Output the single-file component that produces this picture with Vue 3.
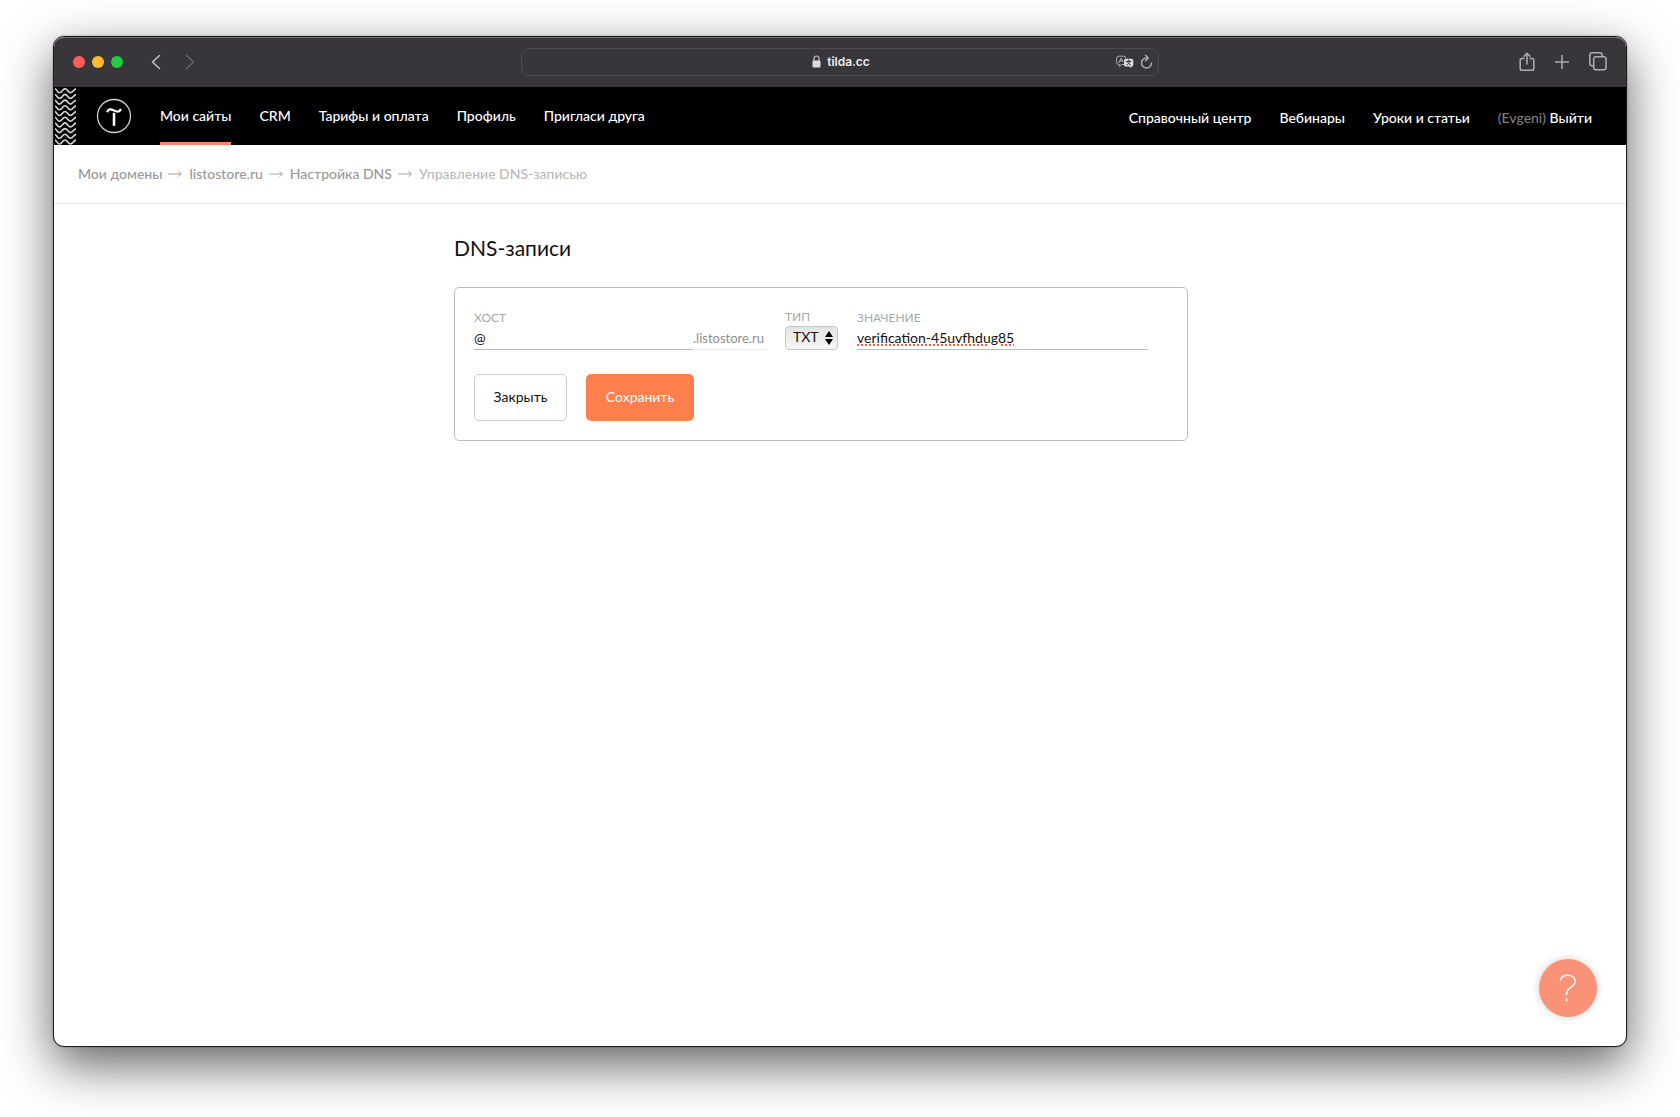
<script setup>
import { ref } from 'vue'

const mainLinks = ['Мои сайты', 'CRM', 'Тарифы и оплата', 'Профиль', 'Пригласи друга']
const sideLinks = ['Справочный центр', 'Вебинары', 'Уроки и статьи']
const crumbs = ['Мои домены', 'listostore.ru', 'Настройка DNS']
const types = ['TXT', 'A', 'AAAA', 'CNAME', 'MX']

const host = ref('@')
const type = ref('TXT')
const value = ref('verification-45uvfhdug85')
</script>

<template>
  <div class="desktop">
    <div class="window">
      <header class="toolbar">
        <div class="side">
          <div class="lights"><i class="red"></i><i class="yellow"></i><i class="green"></i></div>
          <button class="icon back" aria-label="Назад">
            <svg width="10" height="16" viewBox="0 0 10 16"><path d="M8.500 1.500 1.500 8l7 6.500" /></svg>
          </button>
          <button class="icon forward" aria-label="Вперёд">
            <svg width="10" height="16" viewBox="0 0 10 16"><path d="M1.500 1.500 8.500 8l-7 6.500" /></svg>
          </button>
        </div>
        <div class="address">
          <span class="site">
            <svg width="9" height="13" viewBox="0 0 9 13">
              <path d="M2 6V3.500a2.500 2.500 0 0 1 5 0V6" fill="none" stroke="#c4c3c6" stroke-width="1.200" />
              <rect x="0.500" y="5.500" width="8" height="7" rx="1.200" fill="#dddcdf" />
            </svg>
            tilda.cc
          </span>
          <span class="address-tools">
            <button class="icon" aria-label="Перевести">
              <svg width="18" height="14" viewBox="0 0 18 14">
                <path d="M8 9.500H5.500L3.500 11.500V9.500H2.500A1.800 1.800 0 0 1 .7 7.700V3A1.800 1.800 0 0 1 2.500 1.200h5.300A1.800 1.800 0 0 1 9.600 3M3 7.800 5.200 3l1.700 3.500M4 6h2.500" style="stroke-width: 1" />
                <path d="M9.800 3.700h5.700A1.800 1.800 0 0 1 17.300 5.500v4.200a1.800 1.800 0 0 1-1.800 1.800V13.200L13.700 11.500H9.800A1.800 1.800 0 0 1 8 9.700V5.500A1.800 1.800 0 0 1 9.800 3.700Z" fill="#dddcdf" stroke="none" />
                <path d="M10.300 6.300h4.600M12.600 5v1.300M14 6.500c-.4 1.500-1.600 2.700-3.200 3.300M11.400 6.800c.5 1.300 1.700 2.400 3.100 3" fill="none" stroke="#39363b" stroke-width="1" />
              </svg>
            </button>
            <button class="icon" aria-label="Обновить">
              <svg width="13" height="16" viewBox="0 0 13 16">
                <path d="M6.500 4A5 5 0 1 0 11.500 9M5.500 1.200 8.400 4 5.500 6.800" />
              </svg>
            </button>
          </span>
        </div>
        <div class="side actions">
          <button class="icon" aria-label="Поделиться">
            <svg width="16" height="20" viewBox="0 0 16 20">
              <path d="M5 6.500H3A1.800 1.800 0 0 0 1.200 8.300v8.200A1.800 1.800 0 0 0 3 18.300h10a1.800 1.800 0 0 0 1.800-1.800V8.300A1.800 1.800 0 0 0 13 6.500h-2M8 12V1.300M5 4.200l3-3 3 3" />
            </svg>
          </button>
          <button class="icon" aria-label="Новая вкладка">
            <svg width="14" height="14" viewBox="0 0 14 14"><path d="M7 .5v13M.5 7h13" /></svg>
          </button>
          <button class="icon" aria-label="Все вкладки">
            <svg width="18" height="19" viewBox="0 0 18 19">
              <rect x="4.700" y="4.700" width="12.300" height="13" rx="2.200" />
              <path d="M4.700 13.700H3A2.200 2.200 0 0 1 .8 11.500V3A2.200 2.200 0 0 1 3 .8h8A2.200 2.200 0 0 1 13.200 3v1.700" />
            </svg>
          </button>
        </div>
      </header>

      <nav class="nav">
        <svg class="waves" width="21" height="57" viewBox="0 0 21 57" aria-hidden="true">
          <path v-for="n in 11" :key="n" :d="`M-1 ${n * 5.7 - 5}c3 0 3 4 5.500 4s3 -4 5.500 -4 3 4 5.500 4 3 -4 6.500 -4`" />
        </svg>
        <a href="#" class="logo" aria-label="Tilda">
          <svg width="36" height="36" viewBox="0 0 36 36">
            <circle cx="18" cy="18" r="16.500" fill="none" stroke="#d0d0d0" stroke-width="1.300" />
            <path d="M11.200 14.300C12 10.800 14.500 10.800 18 12.500S23.800 14 24.800 10.800" fill="none" stroke="#fff" stroke-width="2.200" />
            <path d="M18 14.800v13" stroke="#fff" stroke-width="2.500" />
          </svg>
        </a>
        <div class="links">
          <a v-for="(link, i) in mainLinks" :key="link" href="#" :class="{ current: i === 0 }">{{ link }}</a>
        </div>
        <div class="links right">
          <a v-for="link in sideLinks" :key="link" href="#">{{ link }}</a>
          <span class="account"><span class="user">(Evgeni)</span> <a href="#">Выйти</a></span>
        </div>
      </nav>

      <div class="crumbs">
        <template v-for="crumb in crumbs" :key="crumb">
          <a href="#">{{ crumb }}</a>
          <svg width="15" height="8" viewBox="0 0 15 8"><path d="M0 4h13M10.500 1.500 13.500 4l-3 2.500" /></svg>
        </template>
        <span>Управление DNS-записью</span>
      </div>

      <main class="content">
        <div class="column">
          <h1>DNS-записи</h1>
          <form class="card" @submit.prevent>
            <div class="fields">
              <div class="field host">
                <label for="host">ХОСТ</label>
                <div class="host-row">
                  <input id="host" v-model="host" type="text" />
                  <span class="suffix">.listostore.ru</span>
                </div>
              </div>
              <div class="field type">
                <label for="type">ТИП</label>
                <div class="select">
                  <select id="type" v-model="type">
                    <option v-for="t in types" :key="t">{{ t }}</option>
                  </select>
                  <svg width="8" height="14" viewBox="0 0 8 14" aria-hidden="true"><path d="M4 0 8 6H0ZM4 14 0 8h8Z" /></svg>
                </div>
              </div>
              <div class="field value">
                <label for="value">ЗНАЧЕНИЕ</label>
                <input id="value" v-model="value" type="text" class="misspelled" />
              </div>
            </div>
            <div class="buttons">
              <button type="button" class="close">Закрыть</button>
              <button type="submit" class="save">Сохранить</button>
            </div>
          </form>
        </div>
      </main>

      <button class="help" aria-label="Помощь">
        <svg width="18" height="28" viewBox="0 0 18 28">
          <path d="M1.500 6.500C2 3 5 1.300 8.700 1.300c4.500 0 7.500 2.500 7.500 6 0 6.200-8.700 5.700-8.700 12.700v1M7.500 24.200v3" />
        </svg>
      </button>
    </div>
  </div>
</template>

<style>
body {
  background: #fff;
}
</style>

<style scoped>
* {
  box-sizing: border-box;
}
.desktop {
  min-height: 100vh;
  padding: 36px 53px 70px;
  display: flex;
  overflow: hidden;
  font-family: Lato, "Open Sans", sans-serif;
  font-size: 14px;
  line-height: 20px;
  color: #111;
}
.window {
  position: relative;
  flex: 1;
  min-width: 0;
  display: flex;
  flex-direction: column;
  border: 1px solid #1c1c1c;
  border-radius: 11px;
  background: #fff;
  box-shadow: 0 0 2px rgba(0, 0, 0, 0.4), 0 18px 50px rgba(0, 0, 0, 0.62);
}
a {
  color: inherit;
  text-decoration: none;
}
button,
input,
select {
  font: inherit;
  color: inherit;
  padding: 0;
  border: 0;
  background: none;
  border-radius: 0;
  outline: none;
}
svg {
  display: block;
}

.toolbar {
  height: 50px;
  display: flex;
  align-items: center;
  background: #39363b;
  border-radius: 10px 10px 0 0;
  border-top: 1px solid #706e72;
  padding: 0 19px 2px;
}
.side {
  flex: 1;
  display: flex;
  align-items: center;
}
.lights {
  display: flex;
  gap: 7px;
  margin-right: 28px;
}
.lights i {
  width: 12px;
  height: 12px;
  border-radius: 50%;
}
.red {
  background: #ff5f57;
}
.yellow {
  background: #febc2e;
}
.green {
  background: #28c840;
}
.icon svg {
  fill: none;
  stroke: #aeadb1;
  stroke-width: 1.5;
  stroke-linecap: round;
  stroke-linejoin: round;
}
.back svg {
  stroke: #c4c3c6;
}
.forward {
  margin-left: 24px;
}
.forward svg {
  stroke: #656368;
}
.address {
  position: relative;
  flex: 0 1 638px;
  height: 28px;
  display: flex;
  align-items: center;
  justify-content: center;
  border: 1px solid #4b484e;
  border-radius: 8px;
}
.site {
  display: flex;
  align-items: center;
  gap: 6px;
  padding-left: 2px;
  font-family: Inter, sans-serif;
  font-size: 12px;
  font-weight: 600;
  color: #ededee;
}
.address-tools {
  position: absolute;
  right: 5px;
  display: flex;
  align-items: center;
  gap: 6px;
}
.actions {
  justify-content: flex-end;
  gap: 20px;
}

.nav {
  height: 58px;
  display: flex;
  align-items: center;
  background: #000;
  color: #fff;
  padding-right: 34px;
  font-weight: 500;
}
.waves {
  margin-left: 1px;
}
.waves path {
  fill: none;
  stroke: #d6d6d6;
  stroke-width: 1.6;
}
.logo {
  margin: 0 28px 0 20px;
}
.links {
  align-self: stretch;
  display: flex;
  gap: 28px;
  white-space: nowrap;
}
.links > a {
  display: flex;
  align-items: center;
}
.current {
  box-shadow: inset 0 -3px #fa876b;
}
.right {
  margin-left: auto;
  padding-top: 3px;
}
.account {
  align-self: center;
}
.user {
  color: #7d7d7d;
}

.crumbs {
  height: 59px;
  display: flex;
  align-items: center;
  gap: 6px;
  padding: 0 24px;
  border-bottom: 1px solid #e6e6e6;
  font-weight: 500;
  color: #999;
}
.crumbs svg {
  fill: none;
  stroke: #a5a5a5;
}
.crumbs span {
  color: #bababa;
}

.content {
  flex: 1;
  display: flex;
  justify-content: center;
  padding: 29px 38px 40px 0;
}
.column {
  flex: 0 1 734px;
}
h1 {
  margin: 0 0 24px;
  font-size: 21px;
  line-height: 30px;
  font-weight: 400;
}
.card {
  border: 1px solid #bdbdbd;
  border-radius: 5px;
  padding: 19px 38px 19px 19px;
}
.fields {
  display: flex;
  align-items: flex-end;
}
.field label {
  display: block;
  font-size: 12px;
  line-height: 19px;
  color: #a8a8a8;
}
.host {
  flex: 0 1 292px;
}
.host-row {
  display: flex;
}
.field input {
  display: block;
  width: 100%;
  height: 23px;
  padding-bottom: 2px;
  border-bottom: 1px solid #bdbdbd;
}
.host-row input {
  flex: 1;
  min-width: 0;
}
.suffix {
  flex: 0 0 73px;
  height: 23px;
  font-size: 13px;
  line-height: 22px;
  color: #8e8e8e;
  border-bottom: 1px solid #ececec;
}
.type {
  margin: 0 19px;
}
.select {
  position: relative;
}
.select select {
  appearance: none;
  display: block;
  width: 53px;
  height: 24px;
  padding: 0 7px 2px;
  border: 1px solid #c6c6c6;
  border-radius: 4px;
  background: linear-gradient(#e4e4e4, #f6f6f6);
}
.select svg {
  position: absolute;
  right: 5px;
  top: 5px;
  pointer-events: none;
}
.value {
  flex: 0 1 291px;
}
.field .misspelled {
  text-decoration: underline dotted #ff5a50 2px;
  text-underline-offset: 2px;
}
.buttons {
  display: flex;
  gap: 19px;
  margin-top: 24px;
}
.buttons button {
  height: 47px;
  padding-bottom: 2px;
  border-radius: 5px;
}
.close {
  width: 93px;
  border: 1px solid #ccc;
}
.save {
  width: 108px;
  background: #ff7f4d;
}
.buttons .save {
  color: #fff;
}
.help {
  position: absolute;
  right: 29px;
  bottom: 29px;
  width: 58px;
  height: 58px;
  display: flex;
  align-items: center;
  justify-content: center;
  border-radius: 50%;
  background: #fa9278;
  box-shadow: 0 0 8px rgba(0, 0, 0, 0.2);
}
.help svg {
  fill: none;
  stroke: #fff;
  stroke-width: 1.5;
}
</style>
